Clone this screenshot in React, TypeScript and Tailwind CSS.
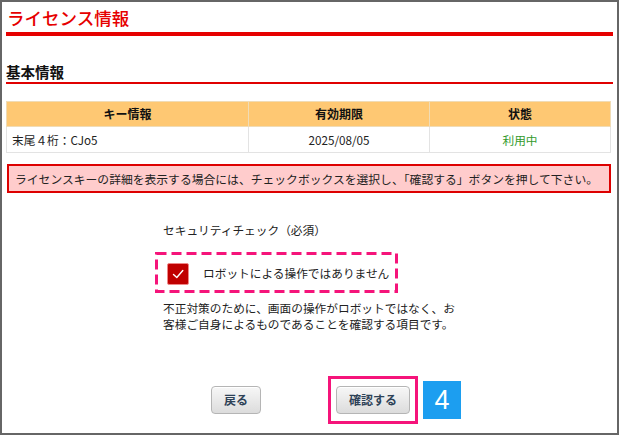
import React from "react";

const FONT = {
  fontFamily: '"Noto Sans CJK JP", "Noto Sans", "Liberation Sans", sans-serif',
};

const ROWS = [{ key: "末尾４桁：CJo5", expires: "2025/08/05", status: "利用中" }];

const GrayButton = ({ children }: { children: React.ReactNode }) => (
  <button
    type="button"
    className="h-[28px] px-[12px] rounded-[4px] border border-[#b5b5b5] bg-gradient-to-b from-[#f7f7f7] to-[#dcdcdc] text-[12px] font-bold text-[#2e4257] leading-none shadow-[0_1px_0_#fff_inset]"
  >
    {children}
  </button>
);

export default function App() {
  return (
    <div
      className="w-[619px] h-[435px] border-2 border-[#666] bg-white px-[4px] text-[#333] overflow-hidden"
      style={FONT}
    >
      {/* Page title */}
      <h1 className="pt-[3px] pb-[1px] pl-[1px] text-[17.5px] leading-[26px] font-medium text-[#e60000] border-b-4 border-[#e60000]">
        ライセンス情報
      </h1>

      {/* Section heading */}
      <h2 className="mt-[26px] text-[14.5px] leading-[20px] font-bold text-[#111] border-b-2 border-[#e00000]">
        基本情報
      </h2>

      {/* License table */}
      <table className="mt-[17px] w-[605px] border-collapse text-[11.7px]">
        <thead>
          <tr className="bg-[#fec873] h-[25px]">
            <th className="w-[242px] border border-[#f0dcb6] font-bold text-[#111] text-[12px]">キー情報</th>
            <th className="w-[181px] border border-[#f0dcb6] font-bold text-[#111] text-[12px]">有効期限</th>
            <th className="border border-[#f0dcb6] font-bold text-[#111] text-[12px]">状態</th>
          </tr>
        </thead>
        <tbody>
          {ROWS.map((row) => (
            <tr key={row.key} className="h-[26px]">
              <td className="border border-[#e3e3e3] pl-[5px] text-left text-[#222]">{row.key}</td>
              <td className="border border-[#e3e3e3] text-center text-[#222]">{row.expires}</td>
              <td className="border border-[#e3e3e3] text-center text-[#339a2b]">{row.status}</td>
            </tr>
          ))}
        </tbody>
      </table>

      {/* Notice */}
      <div className="mt-[11px] ml-[1px] h-[29px] w-[604px] border-2 border-[#dd0000] bg-[#ffcccc] pl-[6px] flex items-center text-[11.8px] text-[#222]">
        ライセンスキーの詳細を表示する場合には、チェックボックスを選択し、「確認する」ボタンを押して下さい。
      </div>

      {/* Security check */}
      <div className="ml-[149px] w-[310px] text-[11.7px] text-[#222]">
        <p className="mt-[28px] pl-[8px] leading-[18px]">セキュリティチェック（必須）</p>

        <div className="relative mt-[13px] w-[243px] h-[41px] flex items-center pl-[12px]">
          <svg className="absolute inset-0 pointer-events-none" width="243" height="41" viewBox="0 0 243 41" fill="none">
            <rect x="1.5" y="1.5" width="240" height="38" stroke="#f5147a" strokeWidth="3" strokeDasharray="10 5" />
          </svg>
          <span className="w-[22px] h-[22px] mt-[2px] rounded-[2px] bg-[#c00000] border border-[#ee8888] flex items-center justify-center">
            <svg width="16" height="16" viewBox="0 0 16 16" fill="none">
              <path d="M3.5 8.5 L6.8 11.5 L12.8 4.5" stroke="#fff" strokeWidth="1.4" strokeLinecap="round" strokeLinejoin="round" />
            </svg>
          </span>
          <span className="ml-[14px]">ロボットによる操作ではありません</span>
        </div>

        <p className="mt-[7px] pl-[8px] leading-[16px]">
          不正対策のために、画面の操作がロボットではなく、お
          <br />
          客様ご自身によるものであることを確認する項目です。
        </p>
      </div>

      {/* Actions */}
      <div className="mt-[44px] ml-[205px] flex items-center">
        <GrayButton>戻る</GrayButton>
        <div className="ml-[67px] border-[3px] border-[#f5147a] px-[5px] py-[7px]">
          <GrayButton>確認する</GrayButton>
        </div>
        <div
          className="ml-[5px] w-[38px] h-[38px] bg-[#1c9ef0] flex items-center justify-center text-white text-[27px] leading-none"
          style={{ fontFamily: '"Liberation Sans", Arial, sans-serif' }}
        >
          4
        </div>
      </div>
    </div>
  );
}
